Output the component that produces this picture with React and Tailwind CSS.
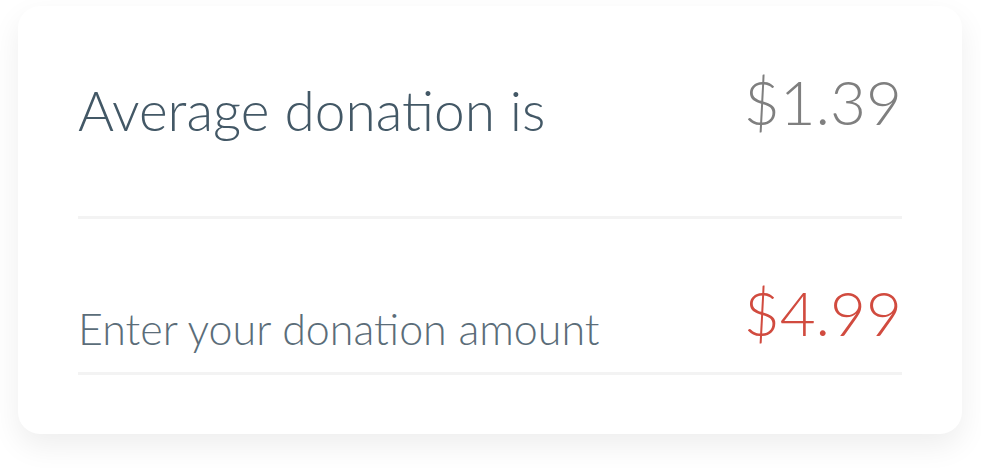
export default function App() {
  return (
    <div className="w-[981px] h-[468px] bg-white overflow-hidden" style={{ fontFamily: "Lato, 'Open Sans', sans-serif" }}>
      <div className="mt-[6px] ml-[18px] w-[944px] h-[428px] rounded-[22px] bg-white shadow-[0_12px_30px_rgba(0,0,0,0.07)] px-[60px] pt-[64px]">
        <div className="flex items-start justify-between">
          <div className="mt-[13px] text-[55px] leading-none font-light text-[#435866]">Average donation is</div>
          <div className="text-[62px] leading-none font-light text-[#7f7f7f]">$1.39</div>
        </div>
        <div className="mt-[78px] h-[3px] bg-[#f3f3f3]" />
        <div className="mt-[62px] flex items-start justify-between">
          <div className="mt-[26px] text-[43px] leading-none font-light text-[#5b6d79]">Enter your donation amount</div>
          <div className="text-[62px] leading-none font-light text-[#d14b3f]">$4.99</div>
        </div>
        <div className="mt-[22px] h-[3px] bg-[#f3f3f3]" />
      </div>
    </div>
  );
}
